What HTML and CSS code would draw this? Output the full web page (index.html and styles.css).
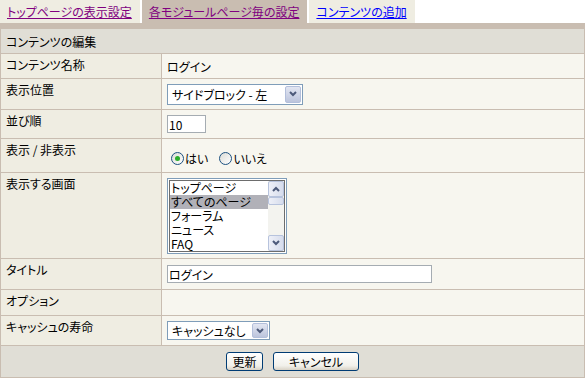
FILE: index.html
```html
<!DOCTYPE html>
<html lang="ja">
<head>
  <meta charset="UTF-8">
  <title>コンテンツの編集</title>
  <link rel="stylesheet" href="styles.css">
</head>
<body>
  <div class="tabs">
    <a class="tab" href="#">トップページの表示設定</a>
    <a class="tab tab-current" href="#">各モジュールページ毎の設定</a>
    <a class="tab tab-new" href="#">コンテンツの追加</a>
  </div>

  <form class="panel">
    <div class="panel-head">コンテンツの編集</div>

    <div class="label">コンテンツ名称</div>
    <div class="value">ログイン</div>

    <div class="label">表示位置</div>
    <div class="value">
      <span class="select select-pos">
        <span class="select-text">サイドブロック - 左</span>
        <span class="select-btn"><svg width="8" height="6" viewBox="0 0 8 6"><path d="M1 1 L4 4 L7 1" fill="none" stroke="#4d5a7a" stroke-width="2"/></svg></span>
      </span>
    </div>

    <div class="label">並び順</div>
    <div class="value"><input class="field field-order" type="text" value="10"></div>

    <div class="label">表示 / 非表示</div>
    <div class="value value-radio">
      <span class="radio checked"></span><span class="radio-text">はい</span>
      <span class="radio"></span><span class="radio-text">いいえ</span>
    </div>

    <div class="label">表示する画面</div>
    <div class="value">
      <div class="listbox">
        <div class="listbox-inner">
          <ul class="list-items">
            <li>トップページ</li>
            <li class="selected">すべてのページ</li>
            <li>フォーラム</li>
            <li>ニュース</li>
            <li>FAQ</li>
          </ul>
          <div class="scrollbar">
            <span class="sb-btn"><svg width="8" height="6" viewBox="0 0 8 6"><path d="M1 5 L4 2 L7 5" fill="none" stroke="#4d5a7a" stroke-width="2"/></svg></span>
            <span class="sb-thumb"></span>
            <span class="sb-track"></span>
            <span class="sb-btn"><svg width="8" height="6" viewBox="0 0 8 6"><path d="M1 1 L4 4 L7 1" fill="none" stroke="#4d5a7a" stroke-width="2"/></svg></span>
          </div>
        </div>
      </div>
    </div>

    <div class="label">タイトル</div>
    <div class="value"><input class="field field-title" type="text" value="ログイン"></div>

    <div class="label">オプション</div>
    <div class="value"></div>

    <div class="label">キャッシュの寿命</div>
    <div class="value">
      <span class="select select-cache">
        <span class="select-text">キャッシュなし</span>
        <span class="select-btn"><svg width="8" height="6" viewBox="0 0 8 6"><path d="M1 1 L4 4 L7 1" fill="none" stroke="#4d5a7a" stroke-width="2"/></svg></span>
      </span>
    </div>

    <div class="panel-foot">
      <button class="btn btn-submit" type="button">更新</button>
      <button class="btn btn-cancel" type="button">キャンセル</button>
    </div>
  </form>
</body>
</html>
```

FILE: styles.css
```css
body {
  margin: 0;
  font-family: "Noto Sans CJK JP", sans-serif;
  font-size: 12px;
  font-feature-settings: "palt";
  color: #000;
  background-color: #fff;
}
.tabs {
  display: flex;
  gap: 2px;
  height: 23px;
}
.tab {
  display: flex;
  align-items: center;
  padding: 0 8px 0 7px;
  background-color: #efede2;
  color: #800080;
  text-decoration: underline;
}
.tab-current {
  background-color: #c9bdb1;
}
.tab-new {
  color: #0000ff;
}
.panel {
  display: grid;
  grid-template-columns: 160px 1fr;
  grid-template-rows: 24px 24px 30px 28px 33px 85px 30px 25px 29px 31px;
  gap: 1px;
  width: 585px;
  box-sizing: border-box;
  margin: 0;
  padding: 6px 1px 1px;
  background-color: #c9bdb1;
}
.panel-head {
  grid-column: 1 / -1;
  display: flex;
  align-items: center;
  padding-left: 5px;
  background-color: #e0ded6;
}
.label {
  padding: 4px 5px 0;
  line-height: 14px;
  background-color: #efede2;
}
.value {
  display: flex;
  align-items: center;
  padding-left: 5px;
  background-color: #f7f6ef;
}
.value-radio {
  padding-top: 5px;
  padding-left: 9px;
}
.panel-foot {
  grid-column: 1 / -1;
  display: flex;
  justify-content: center;
  align-items: center;
  gap: 10px;
  background-color: #e0ded6;
}
.select {
  display: inline-flex;
  align-items: center;
  box-sizing: border-box;
  border: 1px solid #7f9db9;
  background-color: #fff;
}
.select-pos {
  width: 136px;
  height: 21px;
}
.select-cache {
  width: 103px;
  height: 19px;
}
.select-text {
  flex: 1;
  padding-left: 4px;
  white-space: nowrap;
}
.select-btn {
  display: flex;
  align-items: center;
  justify-content: center;
  box-sizing: border-box;
  width: 16px;
  height: calc(100% - 2px);
  margin-right: 1px;
  border: 1px solid #b3bfdb;
  border-radius: 2px;
  background: linear-gradient(#e2e6f2, #bcc4dc);
}
.field {
  box-sizing: border-box;
  height: 18px;
  margin: 0;
  padding: 0 1px;
  border: 1px solid #a5acb2;
  font: inherit;
  font-feature-settings: "palt";
  background-color: #fff;
}
.field-order {
  width: 39px;
}
.field-title {
  width: 265px;
}
.radio {
  position: relative;
  box-sizing: border-box;
  width: 13px;
  height: 13px;
  border: 1px solid #1c5180;
  border-radius: 50%;
  background: linear-gradient(135deg, #dcdcd6, #fff);
}
.radio.checked::after {
  content: "";
  position: absolute;
  left: 3px;
  top: 3px;
  width: 5px;
  height: 5px;
  border-radius: 50%;
  background-color: #2bae2b;
}
.radio-text {
  margin-right: 11px;
  margin-left: 1px;
}
.listbox {
  box-sizing: border-box;
  width: 120px;
  height: 76px;
  padding: 1px;
  border: 1px solid #7f9db9;
  background-color: #fff;
}
.listbox-inner {
  display: flex;
  box-sizing: border-box;
  height: 100%;
  border: 1px solid #6d6d6d;
}
.list-items {
  flex: 1;
  margin: 0;
  padding: 0;
  list-style: none;
  line-height: 14px;
}
.list-items li {
  padding-left: 1px;
  white-space: nowrap;
}
.list-items .selected {
  background-color: #b1b1b8;
}
.scrollbar {
  display: flex;
  flex-direction: column;
  width: 16px;
  background-color: #f3f3ef;
}
.sb-btn,
.sb-thumb {
  display: flex;
  align-items: center;
  justify-content: center;
  box-sizing: border-box;
  border: 1px solid #b7c3dd;
  border-radius: 2px;
  background: linear-gradient(90deg, #eef0f8, #d6dcec);
}
.sb-btn {
  height: 16px;
}
.sb-thumb {
  height: 8px;
}
.sb-track {
  flex: 1;
}
.btn {
  box-sizing: border-box;
  height: 19px;
  margin: 0;
  padding: 0;
  border: 1px solid #003c74;
  border-radius: 3px;
  font: inherit;
  font-feature-settings: "palt";
  line-height: 15px;
  background: linear-gradient(#fff, #f1f0ea 75%, #d8d2c6);
}
.btn-submit {
  width: 37px;
}
.btn-cancel {
  width: 86px;
}
```
